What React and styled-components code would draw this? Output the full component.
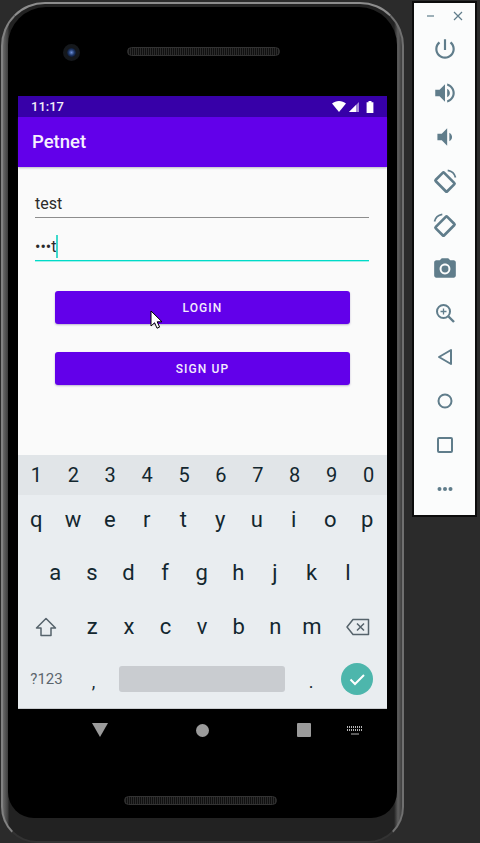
import React from 'react';
import styled, { createGlobalStyle } from 'styled-components';

const GlobalStyle = createGlobalStyle`
    html, body {
        margin: 0;
        height: 100%;
        overflow: hidden;
        background: #2b2b2b;
    }
    * {
        box-sizing: border-box;
    }
`;

const Page = styled.div`
    position: relative;
    display: flex;
    align-items: flex-start;
    width: 480px;
    height: 843px;
    overflow: hidden;
    background: #2b2b2b;
    font-family: Roboto, "Liberation Sans", sans-serif;
`;

const PhoneShell = styled.div`
    width: 403px;
    height: 841px;
    margin: 2px 0 0 1px;
    padding: 3px 5px 0;
    border-radius: 44px 44px 36px 36px;
    border: 2px solid;
    border-color: #8d8d8d #707070 #333 #828282;
    background: linear-gradient(90deg, #6a6a6a 0, #3d3d3d 5px, #222 6px, #222 98%, #5e5e5e 99%, #3e3e3e 100%);
`;

const Bezel = styled.div`
    height: 811px;
    border-radius: 38px 38px 26px 26px;
    background: #000;
`;

const BezelTop = styled.div`
    display: flex;
    align-items: center;
    height: 89px;
    padding-left: 55px;
`;

const Camera = styled.div`
    width: 17px;
    height: 17px;
    margin-top: 1px;
    border-radius: 50%;
    border: 4px solid #15181c;
    background: radial-gradient(circle, #6d8fd8 0, #1d3566 45%, #0a0f1a 85%);
`;

const Speaker = styled.div`
    width: ${(p) => p.$width}px;
    height: 9px;
    margin-left: ${(p) => p.$left}px;
    border-radius: 5px;
    border: 1px solid #333;
    background: repeating-linear-gradient(90deg, #2b2b2b 0, #2b2b2b 1px, #101010 1px, #101010 2px);
`;

const Screen = styled.div`
    width: 369px;
    height: 613px;
    margin-left: 10px;
    display: flex;
    flex-direction: column;
    background: #fafafa;
`;

const StatusBar = styled.div`
    display: flex;
    align-items: center;
    justify-content: space-between;
    height: 21px;
    padding: 0 13px 0 13px;
    background: #3700a8;
    color: #f2eef9;
    font-size: 13px;
    font-weight: 500;
`;

const StatusIcons = styled.div`
    display: flex;
    align-items: center;
    gap: 3px;
`;

const AppBar = styled.div`
    display: flex;
    align-items: center;
    height: 50px;
    padding-left: 14px;
    background: #6200ea;
    color: #f6f0fe;
    font-size: 18.5px;
    font-weight: 500;
    box-shadow: 0 1px 2px rgba(60, 60, 90, 0.35);
`;

const Form = styled.div`
    flex: 1;
    display: flex;
    flex-direction: column;
    padding: 22px 18px 0 17px;
`;

const Field = styled.div`
    display: flex;
    align-items: center;
    height: 29px;
    margin-bottom: 15px;
    border-bottom: 1px solid #8d8d8d;
    color: #2a2a2a;
    font-size: 16px;
`;

const ActiveField = styled(Field)`
    height: 28px;
    margin-bottom: 30px;
    border-bottom: 1px solid #00dbc8;
    box-shadow: 0 1px 0 rgba(0, 219, 200, 0.35);
`;

const Caret = styled.span`
    display: inline-block;
    width: 2px;
    height: 23px;
    background: rgba(0, 205, 187, 0.75);
`;

const Actions = styled.div`
    display: flex;
    flex-direction: column;
    gap: 28px;
    padding: 0 19px 0 20px;
`;

const Button = styled.div`
    display: flex;
    align-items: center;
    justify-content: center;
    height: 33px;
    border-radius: 3px;
    background: #6200ea;
    color: #f3ecfd;
    font-size: 12px;
    font-weight: 500;
    letter-spacing: 1.1px;
    box-shadow: 0 1px 2px rgba(70, 50, 120, 0.35);
`;

const Keyboard = styled.div`
    height: 254px;
    display: flex;
    flex-direction: column;
    background: #e9edf0;
    border-bottom: 1px solid #c9cccf;
`;

const NumberRow = styled.div`
    display: grid;
    grid-template-columns: repeat(10, 1fr);
    align-items: center;
    height: 40px;
    background: #e1e5e8;
`;

const KeyRow = styled.div`
    display: flex;
    align-items: center;
    height: ${(p) => p.$height}px;
    padding-left: ${(p) => p.$inset || 0}px;
`;

const Digit = styled.div`
    text-align: center;
    color: #13272f;
    font-size: 20px;
    line-height: 24px;
`;

const Key = styled.div`
    width: ${(p) => p.$width || 36.6}px;
    flex: none;
    text-align: center;
    color: #13272f;
    font-size: 22px;
    line-height: 26px;
`;

const SymbolKey = styled.div`
    width: 57px;
    flex: none;
    text-align: center;
    color: #5c666d;
    font-size: 15px;
`;

const PunctKey = styled.div`
    width: ${(p) => p.$width}px;
    flex: none;
    text-align: center;
    color: #13272f;
    font-size: 18px;
    padding-top: 5px;
`;

const SpaceBar = styled.div`
    width: 166px;
    height: 26px;
    margin-left: 7px;
    border-radius: 3px;
    background: #c9ccd0;
`;

const EnterKey = styled.div`
    display: flex;
    align-items: center;
    justify-content: center;
    flex: none;
    width: 32px;
    height: 32px;
    margin-left: 4px;
    border-radius: 50%;
    background: #4db6ac;
`;

const IconSlot = styled.div`
    display: flex;
    align-items: center;
    justify-content: center;
    flex: none;
    width: ${(p) => p.$width}px;
`;

const NavBar = styled.div`
    display: flex;
    align-items: center;
    height: 42px;
`;

const NavItem = styled.div`
    display: flex;
    justify-content: center;
    width: 16px;
    margin-left: ${(p) => p.$left}px;
`;

const BezelBottom = styled.div`
    display: flex;
    align-items: flex-start;
    height: 100px;
    padding: 45px 0 0 116px;
`;

const Toolbar = styled.div`
    display: flex;
    flex-direction: column;
    align-items: center;
    width: 65px;
    height: 516px;
    margin: 1px 0 0 8px;
    border: 2px solid #0c0c0c;
    background: #fbfcfc;
`;

const WindowControls = styled.div`
    display: flex;
    justify-content: center;
    gap: 15px;
    height: 24px;
    padding-top: 7px;
`;

const ToolButton = styled.div`
    display: flex;
    align-items: center;
    justify-content: center;
    width: 44px;
    height: 44px;
`;

const Pointer = styled.svg`
    position: absolute;
    left: 150px;
    top: 310px;
`;

const TOOL = '#607d8b';

const Power = () => (
    <svg width="26" height="26" viewBox="0 0 24 24" fill={TOOL}>
        <path d="M13 3h-2v10h2V3zm4.83 2.17l-1.42 1.42C17.99 7.86 19 9.81 19 12c0 3.87-3.13 7-7 7s-7-3.13-7-7c0-2.19 1.01-4.14 2.58-5.42L6.17 5.17C4.23 6.82 3 9.26 3 12c0 4.97 4.03 9 9 9s9-4.03 9-9c0-2.74-1.23-5.18-3.17-6.83z" />
    </svg>
);
const VolumeUp = () => (
    <svg width="26" height="26" viewBox="0 0 24 24" fill={TOOL}>
        <path d="M3 9v6h4l5 5V4L7 9H3zm13.5 3c0-1.77-1.02-3.29-2.5-4.03v8.05c1.48-.73 2.5-2.25 2.5-4.02zM14 3.23v2.06c2.89.86 5 3.54 5 6.71s-2.11 5.85-5 6.71v2.06c4.01-.91 7-4.49 7-8.77s-2.99-7.86-7-8.77z" />
    </svg>
);
const VolumeDown = () => (
    <svg width="26" height="26" viewBox="0 0 24 24" fill={TOOL}>
        <path d="M18.5 12c0-1.77-1.02-3.29-2.5-4.03v8.05c1.48-.73 2.5-2.25 2.5-4.02zM5 9v6h4l5 5V4L9 9H5z" />
    </svg>
);
const Rotate = ({ flip }) => (
    <svg width="26" height="26" viewBox="0 0 24 24" fill="none" stroke={TOOL} strokeWidth="2.5" style={flip ? { transform: 'scaleX(-1)' } : undefined}>
        <rect x="6.5" y="5.5" width="11" height="15" rx="1" transform="rotate(-45 12 13)" />
        <path d="M14.5 2.2c3.6.6 6.4 3.2 7.2 6.6" strokeWidth="1.6" />
    </svg>
);
const CameraIcon = () => (
    <svg width="26" height="26" viewBox="0 0 24 24" fill={TOOL}>
        <circle cx="12" cy="12" r="3.2" />
        <path d="M9 2L7.17 4H4c-1.1 0-2 .9-2 2v12c0 1.1.9 2 2 2h16c1.1 0 2-.9 2-2V6c0-1.1-.9-2-2-2h-3.17L15 2H9zm3 15c-2.76 0-5-2.24-5-5s2.24-5 5-5 5 2.24 5 5-2.24 5-5 5z" />
    </svg>
);
const ZoomIcon = () => (
    <svg width="24" height="24" viewBox="0 0 24 24" fill="none" stroke={TOOL} strokeWidth="2">
        <circle cx="10.5" cy="10.5" r="6.5" />
        <path d="M15.5 15.5L21 21" strokeWidth="2.4" />
        <path d="M10.5 7.5v6M7.5 10.5h6" strokeWidth="1.3" />
    </svg>
);
const BackIcon = () => (
    <svg width="24" height="24" viewBox="0 0 24 24" fill="none" stroke={TOOL} strokeWidth="2" strokeLinejoin="round">
        <path d="M18 5v14L6 12z" />
    </svg>
);
const HomeIcon = () => (
    <svg width="24" height="24" viewBox="0 0 24 24" fill="none" stroke={TOOL} strokeWidth="2">
        <circle cx="12" cy="12" r="6.5" />
    </svg>
);
const SquareIcon = () => (
    <svg width="24" height="24" viewBox="0 0 24 24" fill="none" stroke={TOOL} strokeWidth="2">
        <rect x="5" y="5" width="14" height="14" rx="1" />
    </svg>
);
const MoreIcon = () => (
    <svg width="24" height="24" viewBox="0 0 24 24" fill={TOOL}>
        <circle cx="6.5" cy="12" r="2" />
        <circle cx="12" cy="12" r="2" />
        <circle cx="17.5" cy="12" r="2" />
    </svg>
);

const tools = [
    <Power />, <VolumeUp />, <VolumeDown />, <Rotate />, <Rotate flip />,
    <CameraIcon />, <ZoomIcon />, <BackIcon />, <HomeIcon />, <SquareIcon />, <MoreIcon />,
];

const row1 = 'qwertyuiop'.split('');
const row2 = 'asdfghjkl'.split('');
const row3 = 'zxcvbnm'.split('');

export default function App() {
    return (
        <Page>
            <GlobalStyle />
            <PhoneShell>
                <Bezel>
                    <BezelTop>
                        <Camera />
                        <Speaker $width={153} $left={47} />
                    </BezelTop>
                    <Screen>
                        <StatusBar>
                            <span>11:17</span>
                            <StatusIcons>
                                <svg width="14" height="11" viewBox="0 0 14 11">
                                    <path d="M0 2.5C2 .9 4.4 0 7 0s5 .9 7 2.5L7 11z" fill="#fff" />
                                </svg>
                                <svg width="11" height="10" viewBox="0 0 11 10">
                                    <path d="M10 0v10H0z" fill="#a58bd8" />
                                    <path d="M7 3v7H0z" fill="#fff" />
                                </svg>
                                <svg width="8" height="12" viewBox="0 0 8 12" style={{ marginLeft: 3 }}>
                                    <path d="M2.5 0h3v1.2H7.4V12H.6V1.2h1.9z" fill="#fff" />
                                </svg>
                            </StatusIcons>
                        </StatusBar>
                        <AppBar>Petnet</AppBar>
                        <Form>
                            <Field>test</Field>
                            <ActiveField>•••t<Caret /></ActiveField>
                            <Actions>
                                <Button>LOGIN</Button>
                                <Button>SIGN UP</Button>
                            </Actions>
                        </Form>
                        <Keyboard>
                            <NumberRow>
                                {'1234567890'.split('').map((n) => <Digit key={n}>{n}</Digit>)}
                            </NumberRow>
                            <KeyRow $height={50}>
                                {row1.map((k) => <Key key={k} $width={36.75}>{k}</Key>)}
                            </KeyRow>
                            <KeyRow $height={56} $inset={19}>
                                {row2.map((k) => <Key key={k}>{k}</Key>)}
                            </KeyRow>
                            <KeyRow $height={52}>
                                <IconSlot $width={56}>
                                    <svg width="22" height="22" viewBox="0 0 22 22" fill="none" stroke="#56636b" strokeWidth="1.5" strokeLinejoin="round">
                                        <path d="M11 2.5L20.5 12H16v7.5H6V12H1.5z" />
                                    </svg>
                                </IconSlot>
                                {row3.map((k) => <Key key={k}>{k}</Key>)}
                                <IconSlot $width={56}>
                                    <svg width="24" height="18" viewBox="0 0 24 18" fill="none" stroke="#56636b" strokeWidth="1.5" strokeLinejoin="round">
                                        <path d="M7 1.5h15.5v15H7L1 9z" />
                                        <path d="M11 5.5l7 7M18 5.5l-7 7" />
                                    </svg>
                                </IconSlot>
                            </KeyRow>
                            <KeyRow $height={52}>
                                <SymbolKey>?123</SymbolKey>
                                <PunctKey $width={37}>,</PunctKey>
                                <SpaceBar />
                                <PunctKey $width={52}>.</PunctKey>
                                <EnterKey>
                                    <svg width="18" height="18" viewBox="0 0 18 18" fill="none" stroke="#fff" strokeWidth="2">
                                        <path d="M2.5 9.5l4.5 4.5L16 5" />
                                    </svg>
                                </EnterKey>
                            </KeyRow>
                        </Keyboard>
                    </Screen>
                    <NavBar>
                        <NavItem $left={84}>
                            <svg width="16" height="14" viewBox="0 0 16 14"><path d="M0 0h16L8 14z" fill="#9b9b9b" /></svg>
                        </NavItem>
                        <NavItem $left={86}>
                            <svg width="13" height="13" viewBox="0 0 13 13"><circle cx="6.5" cy="6.5" r="6.5" fill="#9b9b9b" /></svg>
                        </NavItem>
                        <NavItem $left={86}>
                            <svg width="14" height="14" viewBox="0 0 14 14"><rect width="14" height="14" rx="1" fill="#9b9b9b" /></svg>
                        </NavItem>
                        <NavItem $left={35}>
                            <svg width="16" height="9" viewBox="0 0 16 9" fill="none" stroke="#b5b5b5" strokeWidth="2" strokeDasharray="1 1">
                                <path d="M0 1h16M0 4h16" />
                                <path d="M4 8h8" strokeDasharray="none" strokeWidth="1" />
                            </svg>
                        </NavItem>
                    </NavBar>
                    <BezelBottom>
                        <Speaker $width={153} $left={0} />
                    </BezelBottom>
                </Bezel>
            </PhoneShell>
            <Toolbar>
                <WindowControls>
                    <svg width="12" height="12" viewBox="0 0 12 12" stroke={TOOL} strokeWidth="1.2"><path d="M2 6h7" /></svg>
                    <svg width="12" height="12" viewBox="0 0 12 12" stroke={TOOL} strokeWidth="1.2"><path d="M2 2l8 8M10 2l-8 8" /></svg>
                </WindowControls>
                {tools.map((icon, i) => <ToolButton key={i}>{icon}</ToolButton>)}
            </Toolbar>
            <Pointer width="14" height="20" viewBox="0 0 14 20">
                <path d="M1 1v15l3.6-3.2 2.4 5.4 2.6-1.1-2.4-5.3H12z" fill="#fff" stroke="#000" strokeWidth="1" />
            </Pointer>
        </Page>
    );
}
